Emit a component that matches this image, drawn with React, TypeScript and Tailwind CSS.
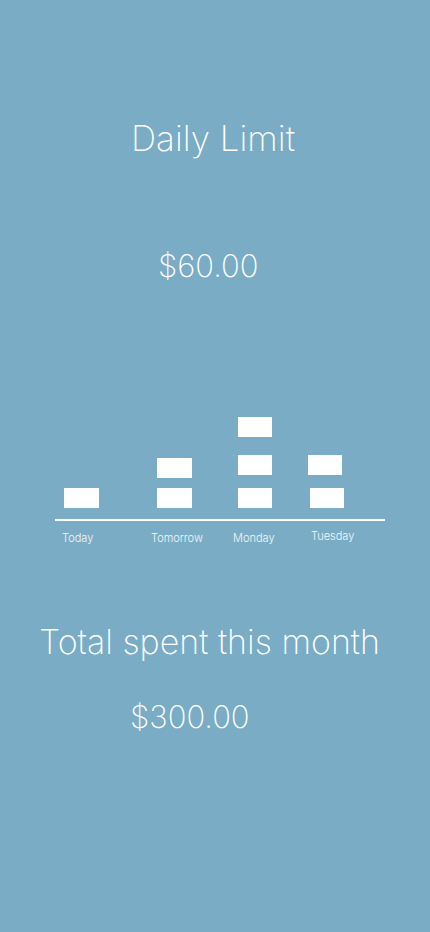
export default function App() {
  return (
    <div className="min-h-[932px] w-full bg-[#7aacc5] font-['Inter','Liberation_Sans',sans-serif] font-extralight text-white">
      <h1 className="pl-[131px] pt-[121px] text-[35px] leading-none font-extralight">Daily Limit</h1>
      <p className="mt-[94px] pl-[158px] text-[31px] leading-none">$60.00</p>

      {/* Spending chart */}
      <div className="mt-[136px]">
        <div className="flex h-[91px] items-end pl-[64px]">
          <div className="h-[20px] w-[35px] bg-white" />
          <div className="ml-[58px] flex flex-col gap-[10px]">
            <div className="h-[20px] w-[35px] bg-white" />
            <div className="h-[20px] w-[35px] bg-white" />
          </div>
          <div className="ml-[46px] flex flex-col">
            <div className="h-[20px] w-[34px] bg-white" />
            <div className="mt-[18px] h-[20px] w-[34px] bg-white" />
            <div className="mt-[13px] h-[20px] w-[34px] bg-white" />
          </div>
          <div className="ml-[36px] flex flex-col">
            <div className="h-[20px] w-[34px] bg-white" />
            <div className="ml-[2px] mt-[13px] h-[20px] w-[34px] bg-white" />
          </div>
        </div>
        <div className="ml-[55px] mt-[11px] h-[2px] w-[330px] bg-white" />
        <div className="mt-[12px] flex items-start pl-[62px] text-[11px] leading-none font-light text-white/90">
          <span className="w-[89px]">Today</span>
          <span className="w-[82px]">Tomorrow</span>
          <span className="w-[78px]">Monday</span>
          <span className="-mt-[2px]">Tuesday</span>
        </div>
      </div>

      <h2 className="mt-[81px] pl-[39px] text-[34px] leading-none font-extralight">Total spent this month</h2>
      <p className="mt-[42px] pl-[130px] text-[31px] leading-none">$300.00</p>
    </div>
  )
}
